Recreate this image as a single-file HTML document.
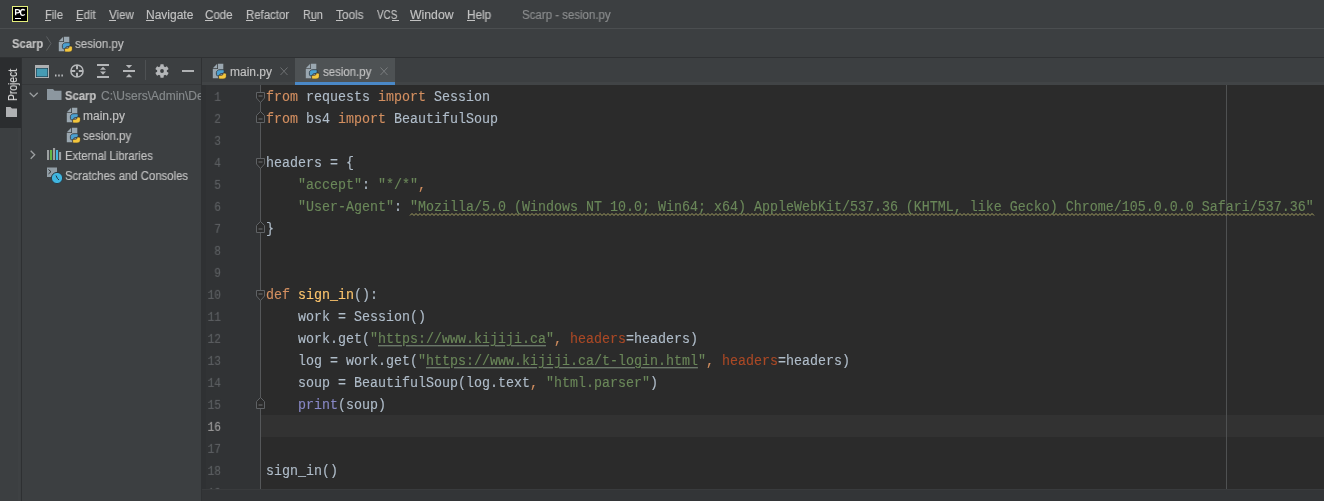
<!DOCTYPE html>
<html><head><meta charset="utf-8">
<style>
*{margin:0;padding:0;box-sizing:border-box}
html,body{width:1324px;height:501px;overflow:hidden;background:#3C3F41}
body{position:relative;font-family:"Liberation Sans",sans-serif;font-size:12px;color:#C2C2C2}
.a{position:absolute;white-space:pre;line-height:14px;will-change:transform;-webkit-text-stroke:0.15px currentColor}
.r{position:absolute}
.mu{position:absolute;height:1px;background:#C2C2C2}
svg{position:absolute;overflow:visible}
.code{will-change:transform;position:absolute;left:266px;transform:translateY(2px) scaleY(1.1);transform-origin:0 14px;font-family:"Liberation Mono",monospace;font-size:13.333px;line-height:22px;height:22px;white-space:pre;color:#B0BDCA;-webkit-text-stroke:0.12px currentColor}
.ln{will-change:transform;position:absolute;left:196px;transform:translateY(1.5px) scale(0.93,1.12);transform-origin:25px 14px;width:25px;text-align:right;font-family:"Liberation Mono",monospace;font-size:12px;-webkit-text-stroke:0.1px currentColor;line-height:22px;height:22px;color:#606366}
.ln.cur{color:#A4A3A3}
.k{color:#D38F60}.s{color:#6A8759}.f{color:#FFC66D}.b{color:#8888C6}.n{color:#AA4926}
.ul{text-decoration:underline;text-decoration-color:#7C8C7A;text-underline-offset:2px}

</style></head><body>
<svg width="0" height="0" style="position:absolute">
<defs>
<symbol id="py" viewBox="0 0 16 16">
<path d="M0.8 5.2L5.2 0.8V5.2Z" fill="#9AA7B0"/>
<path d="M6 0.8H11.3V15.2H0.8V6H6Z" fill="#9AA7B0"/>
<path d="M5.5 7.5Q6 6.7 8 6.7H11.2Q12.2 6.7 12.2 7.8V9.6Q12.2 10.6 11.2 10.6H9Q7.9 10.6 7.9 11.7V12.8H5.6Q4.4 12.8 4.4 11.3V9.5Q4.4 8.2 5.5 7.5Z" fill="#4A9FD0" stroke="#2C2E30" stroke-width=".75"/>
<path d="M13.3 15.3Q12.8 16.1 10.8 16.1H7.6Q6.6 16.1 6.6 15V13.2Q6.6 12.2 7.6 12.2H9.8Q10.9 12.2 10.9 11.1V10H13.2Q14.4 10 14.4 11.5V13.3Q14.4 14.6 13.3 15.3Z" fill="#F4C63D" stroke="#2C2E30" stroke-width=".75"/>
</symbol>
</defs>
</svg>
<!-- backgrounds -->
<div class="r" style="left:0;top:0;width:1324px;height:28px;background:#3C3F41"></div>
<div class="r" style="left:0;top:28px;width:1324px;height:1px;background:#4B4E50"></div>
<div class="r" style="left:0;top:29px;width:1324px;height:28px;background:#3C3F41"></div>
<div class="r" style="left:0;top:57px;width:1324px;height:1px;background:#2F3133"></div>
<div class="r" style="left:0;top:58px;width:21px;height:443px;background:#3C3F41"></div>
<div class="r" style="left:0;top:58px;width:21px;height:70px;background:#2B2D2F"></div>
<div class="r" style="left:21px;top:58px;width:1px;height:443px;background:#2E3032"></div>
<div class="r" style="left:18px;top:128px;width:2px;height:373px;background:#3E4143"></div>
<div class="r" style="left:22px;top:58px;width:179px;height:443px;background:#3C3F41"></div>
<div class="r" style="left:22px;top:84px;width:179px;height:1px;background:#353739"></div>
<div class="r" style="left:201px;top:58px;width:1px;height:443px;background:#2F3133"></div>
<div class="r" style="left:202px;top:58px;width:1122px;height:27px;background:#3C3F41"></div>
<div class="r" style="left:202px;top:82px;width:1122px;height:3px;background:#414446"></div>
<div class="r" style="left:295px;top:58px;width:100px;height:27px;background:#4E5254"></div>
<div class="r" style="left:295px;top:82px;width:100px;height:3px;background:#4A88C7"></div>
<div class="r" style="left:202px;top:85px;width:58px;height:404px;background:#313335"></div>
<div class="r" style="left:202px;top:85px;width:4px;height:404px;background:#2F3133"></div>
<div class="r" style="left:260px;top:85px;width:1064px;height:404px;background:#2B2B2B"></div>
<div class="r" style="left:261px;top:415px;width:1063px;height:22px;background:#323232"></div>
<div class="r" style="left:260px;top:85px;width:1px;height:404px;background:#555759"></div>
<div class="r" style="left:1226px;top:85px;width:1px;height:404px;background:#4F5152"></div>

<!-- PC logo -->
<div class="r" style="left:12px;top:6px;width:16px;height:16px;background:#000;border:1px solid #E4EE7C"></div>
<svg style="left:12px;top:6px" width="16" height="16"><path d="M3.6 9.2V3.6H5.6C7.2 3.6 7.6 4.4 7.6 5.2C7.6 6 7.2 6.8 5.6 6.8H3.6" fill="none" stroke="#fff" stroke-width="1.3"/><path d="M12.8 4.4C12.3 3.8 11.7 3.5 10.9 3.5C9.4 3.5 8.5 4.7 8.5 6.4C8.5 8.1 9.4 9.3 10.9 9.3C11.7 9.3 12.3 9 12.8 8.4" fill="none" stroke="#fff" stroke-width="1.3"/></svg>
<div class="r" style="left:15px;top:18px;width:6px;height:1px;background:#fff"></div>

<!-- menu -->
<div class="a" style="left:45px;top:8px;transform:scaleX(0.930);transform-origin:0 0">File</div><div class="mu" style="left:45px;top:20px;width:6px"></div>
<div class="a" style="left:76px;top:8px;transform:scaleX(0.957);transform-origin:0 0">Edit</div><div class="mu" style="left:76px;top:20px;width:6px"></div>
<div class="a" style="left:109px;top:8px;transform:scaleX(0.962);transform-origin:0 0">View</div><div class="mu" style="left:109px;top:20px;width:7px"></div>
<div class="a" style="left:146px;top:8px">Navigate</div><div class="mu" style="left:146px;top:20px;width:8px"></div>
<div class="a" style="left:205px;top:8px;transform:scaleX(0.962);transform-origin:0 0">Code</div><div class="mu" style="left:205px;top:20px;width:8px"></div>
<div class="a" style="left:246px;top:8px;transform:scaleX(0.952);transform-origin:0 0">Refactor</div><div class="mu" style="left:246px;top:20px;width:7px"></div>
<div class="a" style="left:303px;top:8px;transform:scaleX(0.900);transform-origin:0 0">Run</div><div class="mu" style="left:310px;top:20px;width:6px"></div>
<div class="a" style="left:336px;top:8px;transform:scaleX(0.982);transform-origin:0 0">Tools</div><div class="mu" style="left:336px;top:20px;width:7px"></div>
<div class="a" style="left:377px;top:8px;transform:scaleX(0.820);transform-origin:0 0">VCS</div><div class="mu" style="left:392px;top:20px;width:7px"></div>
<div class="a" style="left:410px;top:8px;transform:scaleX(1.020);transform-origin:0 0">Window</div><div class="mu" style="left:410px;top:20px;width:11px"></div>
<div class="a" style="left:467px;top:8px;transform:scaleX(0.976);transform-origin:0 0">Help</div><div class="mu" style="left:467px;top:20px;width:8px"></div>
<div class="a" style="left:522px;top:8px;color:#8B8D8E;transform:scaleX(0.956);transform-origin:0 0">Scarp - sesion.py</div>

<!-- navbar -->
<div class="a" style="left:12px;top:37px;font-weight:bold;transform:scaleX(0.936);transform-origin:0 0">Scarp</div>
<svg style="left:46px;top:36px" width="6" height="15"><path d="M0.5 0.5L5 7.5L0.5 14.5" fill="none" stroke="#5E6163" stroke-width="1"/></svg>
<svg style="left:58px;top:36px" width="16" height="16"><use href="#py"/></svg>
<div class="a" style="left:75px;top:37px;transform:scaleX(0.959);transform-origin:0 0">sesion.py</div>

<!-- tool strip -->
<div class="a" style="left:6px;top:101px;transform:rotate(-90deg) scaleX(0.86);transform-origin:0 0;color:#D6D6D6;font-size:12px">Project</div>
<svg style="left:6px;top:107px" width="12" height="10"><path d="M0 0H4.5L6 1.5H11V10H0Z" fill="#AFB1B3"/></svg>

<!-- project toolbar -->
<svg style="left:35px;top:65px" width="14" height="13"><rect x="0" y="0" width="14" height="13" fill="#AEB0B2"/><rect x="1" y="3" width="12" height="9" fill="#1F3A48"/><rect x="1.6" y="3.6" width="10.8" height="7.8" fill="#469BB3"/></svg>
<svg style="left:55px;top:74px" width="10" height="3"><rect x="0" y="0.5" width="1.5" height="2" fill="#BBBDBF"/><rect x="3.2" y="0.5" width="1.5" height="2" fill="#BBBDBF"/><rect x="6.4" y="0.5" width="1.5" height="2" fill="#BBBDBF"/></svg>
<svg style="left:70px;top:64px" width="15" height="15"><circle cx="7" cy="7" r="6.1" fill="none" stroke="#B4B6B8" stroke-width="1.5"/><path d="M7 1V5.2M7 8.8V13M1 7H5.2M8.8 7H13" stroke="#B4B6B8" stroke-width="2"/></svg>
<svg style="left:97px;top:64px" width="13" height="14"><path d="M0 1H12M0 13H12" stroke="#B4B6B8" stroke-width="2"/><path d="M3 5.8L6 2.8L9 5.8ZM3 7.6L6 10.8L9 7.6Z" fill="#B4B6B8"/></svg>
<svg style="left:123px;top:65px" width="13" height="13"><path d="M0 6H12" stroke="#B4B6B8" stroke-width="2"/><path d="M2.8 0L6 3.3L9.2 0ZM2.8 12.2L6 8.9L9.2 12.2Z" fill="#B4B6B8"/></svg>
<div class="r" style="left:145px;top:60px;width:1px;height:20px;background:#4E5153"></div>
<svg style="left:155px;top:64px" width="14" height="14" viewBox="0 0 14 14"><g fill="#B4B6B8"><circle cx="7" cy="7" r="4.9"/><rect x="5.3" y="0.3" width="3.4" height="13.4" rx=".6"/><rect x="5.3" y="0.3" width="3.4" height="13.4" rx=".6" transform="rotate(60 7 7)"/><rect x="5.3" y="0.3" width="3.4" height="13.4" rx=".6" transform="rotate(120 7 7)"/></g><circle cx="7" cy="7" r="1.9" fill="#3C3F41"/></svg>
<div class="r" style="left:182px;top:70px;width:12px;height:2px;background:#AFB1B3"></div>

<!-- project tree -->
<svg style="left:29px;top:92px" width="10" height="6"><path d="M0.7 0.7L4.7 4.7L8.7 0.7" fill="none" stroke="#9DA0A2" stroke-width="1.3"/></svg>
<svg style="left:47px;top:89px" width="15" height="12"><path d="M0 0H6L7.5 1.8H14.5V11H0Z" fill="#9AA7B0" opacity=".85"/></svg>
<div class="a" style="left:65px;top:89px;font-weight:bold;width:200px;transform:scaleX(0.936);transform-origin:0 0">Scarp</div>
<div class="r" style="left:100px;top:84px;width:101px;height:20px;overflow:hidden"><div class="a" style="left:1px;top:5px;color:#868A8C">C:\Users\Admin\Desktop\Scarp</div></div>
<svg style="left:66px;top:107px" width="16" height="16"><use href="#py"/></svg>
<div class="a" style="left:83px;top:109px">main.py</div>
<svg style="left:66px;top:127px" width="16" height="16"><use href="#py"/></svg>
<div class="a" style="left:83px;top:129px;transform:scaleX(0.949);transform-origin:0 0">sesion.py</div>
<svg style="left:30px;top:150px" width="6" height="10"><path d="M0.7 0.7L4.7 4.7L0.7 8.7" fill="none" stroke="#9DA0A2" stroke-width="1.3"/></svg>
<svg style="left:47px;top:148px" width="15" height="12"><rect x="0" y="2" width="2.1" height="10" fill="#9DA0A2"/><rect x="3" y="2" width="2.1" height="10" fill="#62B543"/><rect x="6" y="0" width="2.1" height="12" fill="#9DA0A2"/><rect x="9" y="2" width="2.1" height="10" fill="#40B6E0"/><rect x="12" y="4" width="2.1" height="8" fill="#9DA0A2"/></svg>
<div class="a" style="left:65px;top:149px;transform:scaleX(0.940);transform-origin:0 0">External Libraries</div>
<svg style="left:47px;top:167px" width="17" height="17"><rect x="0" y="0.5" width="10" height="9.5" fill="#9AA7B0" opacity=".9"/><path d="M1.5 2.5L4 4.7L1.5 6.9" fill="none" stroke="#2E3032" stroke-width="1"/><circle cx="10" cy="11" r="5.6" fill="#40B6E0" stroke="#2A3A44" stroke-width="1"/><path d="M9 8.5L10.3 11.3L12 13" fill="none" stroke="#20384A" stroke-width="1"/></svg>
<div class="a" style="left:65px;top:169px;transform:scaleX(0.946);transform-origin:0 0">Scratches and Consoles</div>

<!-- tabs -->
<svg style="left:212px;top:63px" width="16" height="16"><use href="#py"/></svg>
<div class="a" style="left:230px;top:65px">main.py</div>
<svg style="left:280px;top:67px" width="8" height="9"><path d="M0.5 0.5L7.5 8M7.5 0.5L0.5 8" stroke="#6E7173" stroke-width="1"/></svg>
<svg style="left:305px;top:63px" width="16" height="16"><use href="#py"/></svg>
<div class="a" style="left:323px;top:65px;transform:scaleX(0.953);transform-origin:0 0">sesion.py</div>
<svg style="left:380px;top:67px" width="8" height="9"><path d="M0.5 0.5L7.5 8M7.5 0.5L0.5 8" stroke="#7A7D7F" stroke-width="1"/></svg>

<!-- fold markers -->
<svg style="left:0;top:0" width="1324" height="501">
<path d="M256.5 92.5H264.5V98L260.5 102.5L256.5 98Z" fill="#2B2B2B" stroke="#5F6265" stroke-width="1"/><path d="M258.5 96H262.5" stroke="#6E7173" stroke-width="1"/>
<path d="M260.5 111.5L264.5 115.5V122.5H256.5V115.5Z" fill="#2B2B2B" stroke="#5F6265" stroke-width="1"/><path d="M258.5 119H262.5" stroke="#6E7173" stroke-width="1"/>
<path d="M256.5 158.5H264.5V164L260.5 168.5L256.5 164Z" fill="#2B2B2B" stroke="#5F6265" stroke-width="1"/><path d="M258.5 162H262.5" stroke="#6E7173" stroke-width="1"/>
<path d="M260.5 221.5L264.5 225.5V232.5H256.5V225.5Z" fill="#2B2B2B" stroke="#5F6265" stroke-width="1"/><path d="M258.5 229H262.5" stroke="#6E7173" stroke-width="1"/>
<path d="M256.5 290.5H264.5V296L260.5 300.5L256.5 296Z" fill="#2B2B2B" stroke="#5F6265" stroke-width="1"/><path d="M258.5 294H262.5" stroke="#6E7173" stroke-width="1"/>
<path d="M260.5 397.5L264.5 401.5V408.5H256.5V401.5Z" fill="#2B2B2B" stroke="#5F6265" stroke-width="1"/><path d="M258.5 405H262.5" stroke="#6E7173" stroke-width="1"/>
<path d="M410 215.5 L412 213.5 L414 215.5 L416 213.5 L418 215.5 L420 213.5 L422 215.5 L424 213.5 L426 215.5 L428 213.5 L430 215.5 L432 213.5 L434 215.5 L436 213.5 L438 215.5 L440 213.5 L442 215.5 L444 213.5 L446 215.5 L448 213.5 L450 215.5 L452 213.5 L454 215.5 L456 213.5 L458 215.5 L460 213.5 L462 215.5 L464 213.5 L466 215.5 L468 213.5 L470 215.5 L472 213.5 L474 215.5 L476 213.5 L478 215.5 L480 213.5 L482 215.5 L484 213.5 L486 215.5 L488 213.5 L490 215.5 L492 213.5 L494 215.5 L496 213.5 L498 215.5 L500 213.5 L502 215.5 L504 213.5 L506 215.5 L508 213.5 L510 215.5 L512 213.5 L514 215.5 L516 213.5 L518 215.5 L520 213.5 L522 215.5 L524 213.5 L526 215.5 L528 213.5 L530 215.5 L532 213.5 L534 215.5 L536 213.5 L538 215.5 L540 213.5 L542 215.5 L544 213.5 L546 215.5 L548 213.5 L550 215.5 L552 213.5 L554 215.5 L556 213.5 L558 215.5 L560 213.5 L562 215.5 L564 213.5 L566 215.5 L568 213.5 L570 215.5 L572 213.5 L574 215.5 L576 213.5 L578 215.5 L580 213.5 L582 215.5 L584 213.5 L586 215.5 L588 213.5 L590 215.5 L592 213.5 L594 215.5 L596 213.5 L598 215.5 L600 213.5 L602 215.5 L604 213.5 L606 215.5 L608 213.5 L610 215.5 L612 213.5 L614 215.5 L616 213.5 L618 215.5 L620 213.5 L622 215.5 L624 213.5 L626 215.5 L628 213.5 L630 215.5 L632 213.5 L634 215.5 L636 213.5 L638 215.5 L640 213.5 L642 215.5 L644 213.5 L646 215.5 L648 213.5 L650 215.5 L652 213.5 L654 215.5 L656 213.5 L658 215.5 L660 213.5 L662 215.5 L664 213.5 L666 215.5 L668 213.5 L670 215.5 L672 213.5 L674 215.5 L676 213.5 L678 215.5 L680 213.5 L682 215.5 L684 213.5 L686 215.5 L688 213.5 L690 215.5 L692 213.5 L694 215.5 L696 213.5 L698 215.5 L700 213.5 L702 215.5 L704 213.5 L706 215.5 L708 213.5 L710 215.5 L712 213.5 L714 215.5 L716 213.5 L718 215.5 L720 213.5 L722 215.5 L724 213.5 L726 215.5 L728 213.5 L730 215.5 L732 213.5 L734 215.5 L736 213.5 L738 215.5 L740 213.5 L742 215.5 L744 213.5 L746 215.5 L748 213.5 L750 215.5 L752 213.5 L754 215.5 L756 213.5 L758 215.5 L760 213.5 L762 215.5 L764 213.5 L766 215.5 L768 213.5 L770 215.5 L772 213.5 L774 215.5 L776 213.5 L778 215.5 L780 213.5 L782 215.5 L784 213.5 L786 215.5 L788 213.5 L790 215.5 L792 213.5 L794 215.5 L796 213.5 L798 215.5 L800 213.5 L802 215.5 L804 213.5 L806 215.5 L808 213.5 L810 215.5 L812 213.5 L814 215.5 L816 213.5 L818 215.5 L820 213.5 L822 215.5 L824 213.5 L826 215.5 L828 213.5 L830 215.5 L832 213.5 L834 215.5 L836 213.5 L838 215.5 L840 213.5 L842 215.5 L844 213.5 L846 215.5 L848 213.5 L850 215.5 L852 213.5 L854 215.5 L856 213.5 L858 215.5 L860 213.5 L862 215.5 L864 213.5 L866 215.5 L868 213.5 L870 215.5 L872 213.5 L874 215.5 L876 213.5 L878 215.5 L880 213.5 L882 215.5 L884 213.5 L886 215.5 L888 213.5 L890 215.5 L892 213.5 L894 215.5 L896 213.5 L898 215.5 L900 213.5 L902 215.5 L904 213.5 L906 215.5 L908 213.5 L910 215.5 L912 213.5 L914 215.5 L916 213.5 L918 215.5 L920 213.5 L922 215.5 L924 213.5 L926 215.5 L928 213.5 L930 215.5 L932 213.5 L934 215.5 L936 213.5 L938 215.5 L940 213.5 L942 215.5 L944 213.5 L946 215.5 L948 213.5 L950 215.5 L952 213.5 L954 215.5 L956 213.5 L958 215.5 L960 213.5 L962 215.5 L964 213.5 L966 215.5 L968 213.5 L970 215.5 L972 213.5 L974 215.5 L976 213.5 L978 215.5 L980 213.5 L982 215.5 L984 213.5 L986 215.5 L988 213.5 L990 215.5 L992 213.5 L994 215.5 L996 213.5 L998 215.5 L1000 213.5 L1002 215.5 L1004 213.5 L1006 215.5 L1008 213.5 L1010 215.5 L1012 213.5 L1014 215.5 L1016 213.5 L1018 215.5 L1020 213.5 L1022 215.5 L1024 213.5 L1026 215.5 L1028 213.5 L1030 215.5 L1032 213.5 L1034 215.5 L1036 213.5 L1038 215.5 L1040 213.5 L1042 215.5 L1044 213.5 L1046 215.5 L1048 213.5 L1050 215.5 L1052 213.5 L1054 215.5 L1056 213.5 L1058 215.5 L1060 213.5 L1062 215.5 L1064 213.5 L1066 215.5 L1068 213.5 L1070 215.5 L1072 213.5 L1074 215.5 L1076 213.5 L1078 215.5 L1080 213.5 L1082 215.5 L1084 213.5 L1086 215.5 L1088 213.5 L1090 215.5 L1092 213.5 L1094 215.5 L1096 213.5 L1098 215.5 L1100 213.5 L1102 215.5 L1104 213.5 L1106 215.5 L1108 213.5 L1110 215.5 L1112 213.5 L1114 215.5 L1116 213.5 L1118 215.5 L1120 213.5 L1122 215.5 L1124 213.5 L1126 215.5 L1128 213.5 L1130 215.5 L1132 213.5 L1134 215.5 L1136 213.5 L1138 215.5 L1140 213.5 L1142 215.5 L1144 213.5 L1146 215.5 L1148 213.5 L1150 215.5 L1152 213.5 L1154 215.5 L1156 213.5 L1158 215.5 L1160 213.5 L1162 215.5 L1164 213.5 L1166 215.5 L1168 213.5 L1170 215.5 L1172 213.5 L1174 215.5 L1176 213.5 L1178 215.5 L1180 213.5 L1182 215.5 L1184 213.5 L1186 215.5 L1188 213.5 L1190 215.5 L1192 213.5 L1194 215.5 L1196 213.5 L1198 215.5 L1200 213.5 L1202 215.5 L1204 213.5 L1206 215.5 L1208 213.5 L1210 215.5 L1212 213.5 L1214 215.5 L1216 213.5 L1218 215.5 L1220 213.5 L1222 215.5 L1224 213.5 L1226 215.5 L1228 213.5 L1230 215.5 L1232 213.5 L1234 215.5 L1236 213.5 L1238 215.5 L1240 213.5 L1242 215.5 L1244 213.5 L1246 215.5 L1248 213.5 L1250 215.5 L1252 213.5 L1254 215.5 L1256 213.5 L1258 215.5 L1260 213.5 L1262 215.5 L1264 213.5 L1266 215.5 L1268 213.5 L1270 215.5 L1272 213.5 L1274 215.5 L1276 213.5 L1278 215.5 L1280 213.5 L1282 215.5 L1284 213.5 L1286 215.5 L1288 213.5 L1290 215.5 L1292 213.5 L1294 215.5 L1296 213.5 L1298 215.5 L1300 213.5 L1302 215.5 L1304 213.5 L1306 215.5 L1308 213.5 L1310 215.5 L1312 213.5 L1314 215.5" fill="none" stroke="#A39F62" stroke-width="1"/>
</svg>
<!-- code -->
<div class="ln" style="top:85px">1</div>
<div class="code" style="top:85px"><span class="k">from</span> requests <span class="k">import</span> Session</div>
<div class="ln" style="top:107px">2</div>
<div class="code" style="top:107px"><span class="k">from</span> bs4 <span class="k">import</span> BeautifulSoup</div>
<div class="ln" style="top:129px">3</div>
<div class="ln" style="top:151px">4</div>
<div class="code" style="top:151px">headers = {</div>
<div class="ln" style="top:173px">5</div>
<div class="code" style="top:173px">    <span class="s">"accept"</span>: <span class="s">"*/*"</span><span class="k">,</span></div>
<div class="ln" style="top:195px">6</div>
<div class="code" style="top:195px">    <span class="s">"User-Agent"</span>: <span class="s w">"Mozilla/5.0 (Windows NT 10.0; Win64; x64) AppleWebKit/537.36 (KHTML, like Gecko) Chrome/105.0.0.0 Safari/537.36"</span></div>
<div class="ln" style="top:217px">7</div>
<div class="code" style="top:217px">}</div>
<div class="ln" style="top:239px">8</div>
<div class="ln" style="top:261px">9</div>
<div class="ln" style="top:283px">10</div>
<div class="code" style="top:283px"><span class="k">def</span> <span class="f">sign_in</span>():</div>
<div class="ln" style="top:305px">11</div>
<div class="code" style="top:305px">    work = Session()</div>
<div class="ln" style="top:327px">12</div>
<div class="code" style="top:327px">    work.get(<span class="s">"<span class="ul">https://www.kijiji.ca</span>"</span><span class="k">, </span><span class="n">headers</span>=headers)</div>
<div class="ln" style="top:349px">13</div>
<div class="code" style="top:349px">    log = work.get(<span class="s">"<span class="ul">https://www.kijiji.ca/t-login.html</span>"</span><span class="k">, </span><span class="n">headers</span>=headers)</div>
<div class="ln" style="top:371px">14</div>
<div class="code" style="top:371px">    soup = BeautifulSoup(log.text<span class="k">, </span><span class="s">"html.parser"</span>)</div>
<div class="ln" style="top:393px">15</div>
<div class="code" style="top:393px">    <span class="b">print</span>(soup)</div>
<div class="ln cur" style="top:415px">16</div>
<div class="ln" style="top:437px">17</div>
<div class="ln" style="top:459px">18</div>
<div class="code" style="top:459px">sign_in()</div>
<div class="ln" style="top:481px">19</div>
<div class="r" style="left:202px;top:489px;width:1122px;height:12px;background:#333537"></div>
<div class="r" style="left:202px;top:489px;width:1122px;height:1px;background:#393B3D"></div>
</body></html>
